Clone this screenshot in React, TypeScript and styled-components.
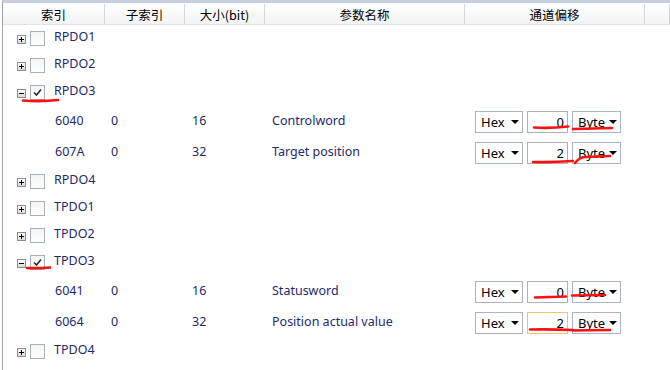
import React from 'react'
import styled, { createGlobalStyle } from 'styled-components'

const GlobalStyle = createGlobalStyle`
    html, body {
        margin: 0;
        padding: 0;
        background: #ffffff;
    }
    body {
        font-family: "Noto Sans", "Noto Sans CJK SC", sans-serif;
    }
`

const COLS = '102px 80px 80px 200px 180px 1fr'

const Frame = styled.div`
    position: relative;
    margin-left: 2px;
    height: 367px;
    border-left: 1px solid #9ea3ab;
    border-top: 3px solid #c7cfdf;
`

const Header = styled.div`
    display: grid;
    grid-template-columns: ${COLS};
    height: 20px;
    margin-top: 1px;
    background: linear-gradient(#ffffff, #f2f3f5);
    border-bottom: 1px solid #e1e2e4;
`

const HeaderCell = styled.div`
    display: flex;
    align-items: center;
    justify-content: center;
    border-right: 1px solid #d6d7d9;
    font-size: 12.5px;
    color: #000;
    font-family: "Noto Sans CJK SC", "Noto Sans", sans-serif;
`

const GroupRow = styled.div`
    display: flex;
    align-items: center;
    height: 27px;
    padding-left: 14px;
`

const Expander = styled.div`
    width: 9px;
    height: 9px;
    box-sizing: border-box;
    border: 1px solid #8e8e8e;
    background: linear-gradient(#ffffff, #d9d9d9);
    margin-top: 2px;
    display: flex;
    align-items: center;
    justify-content: center;
`

const Check = styled.div`
    width: 15px;
    height: 15px;
    box-sizing: border-box;
    margin-left: 4px;
    border: 1px solid #a9b0bd;
    background: linear-gradient(#f4f4f4, #ffffff);
    display: flex;
    align-items: center;
    justify-content: center;
`

const GroupName = styled.span`
    margin-left: 9px;
    padding-bottom: 4px;
    font-size: 12.5px;
    color: #1f2a6b;
`

const ItemRow = styled.div`
    display: grid;
    grid-template-columns: ${COLS};
    align-items: center;
    height: 31px;
    font-size: 12.5px;
    color: #1f2a6b;
`

const Cell = styled.div<{ $pad: number }>`
    padding-left: ${(p) => p.$pad}px;
    padding-bottom: 2px;
    white-space: nowrap;
`

const Controls = styled.div`
    display: flex;
    gap: 4px;
    padding-left: 10px;
`

const Select = styled.div<{ $w: number }>`
    width: ${(p) => p.$w}px;
    height: 22px;
    box-sizing: border-box;
    border: 1px solid #abb4c7;
    background: #fff;
    display: flex;
    align-items: center;
    justify-content: space-between;
    padding: 0 3px 0 5px;
    font-size: 13px;
    color: #000;
`

const Arrow = styled.span`
    width: 0;
    height: 0;
    border-left: 4px solid transparent;
    border-right: 4px solid transparent;
    border-top: 4px solid #000;
`

const NumInput = styled.div<{ $focus?: boolean }>`
    width: 41px;
    height: 22px;
    box-sizing: border-box;
    border: 1px solid ${(p) => (p.$focus ? '#ecc46e' : '#b0b0b0')};
    background: #fff;
    display: flex;
    align-items: center;
    justify-content: flex-end;
    padding-right: 3px;
    font-size: 13px;
    color: #000;
`

const Marks = styled.svg`
    position: absolute;
    left: -3px;
    top: -3px;
    pointer-events: none;
`

type Item = { index: string; sub: string; size: string; name: string; offset: string; focus?: boolean }
type Group = { name: string; open: boolean; items: Item[] }

const groups: Group[] = [
    { name: 'RPDO1', open: false, items: [] },
    { name: 'RPDO2', open: false, items: [] },
    {
        name: 'RPDO3',
        open: true,
        items: [
            { index: '6040', sub: '0', size: '16', name: 'Controlword', offset: '0' },
            { index: '607A', sub: '0', size: '32', name: 'Target position', offset: '2' },
        ],
    },
    { name: 'RPDO4', open: false, items: [] },
    { name: 'TPDO1', open: false, items: [] },
    { name: 'TPDO2', open: false, items: [] },
    {
        name: 'TPDO3',
        open: true,
        items: [
            { index: '6041', sub: '0', size: '16', name: 'Statusword', offset: '0' },
            { index: '6064', sub: '0', size: '32', name: 'Position actual value', offset: '2', focus: true },
        ],
    },
    { name: 'TPDO4', open: false, items: [] },
]

const PlusMinus: React.FC<{ open: boolean }> = ({ open }) => (
    <svg width="7" height="7" viewBox="0 0 7 7">
        <rect x="1" y="3" width="5" height="1" fill="#000" />
        {!open && <rect x="3" y="1" width="1" height="5" fill="#000" />}
    </svg>
)

const Tick = () => (
    <svg width="11" height="11" viewBox="0 0 11 11">
        <path d="M2 5.5 L4.5 8 L9 2.5" fill="none" stroke="#2b2b2b" strokeWidth="1.6" />
    </svg>
)

const redLines = [
    'M23 100.5 Q40 102 58 100',
    'M27 268 Q38 268.5 50 267.5',
    'M534 127.5 Q550 128.5 568 126.5',
    'M573 129 Q592 128.5 612 128',
    'M533 162 Q552 162.5 573 161',
    'M575 163 Q579 157.5 585 157 L610 156',
    'M535 297.5 Q550 297 566 296.5',
    'M572 295.5 Q588 295 605 295',
    'M530 329.5 Q550 329 573 330',
    'M573 330.5 Q590 330 610 330',
]

export default function App() {
    return (
        <>
            <GlobalStyle />
            <Frame>
                <Header>
                    <HeaderCell>索引</HeaderCell>
                    <HeaderCell>子索引</HeaderCell>
                    <HeaderCell>大小(bit)</HeaderCell>
                    <HeaderCell>参数名称</HeaderCell>
                    <HeaderCell>通道偏移</HeaderCell>
                    <HeaderCell />
                </Header>
                {groups.map((g) => (
                    <React.Fragment key={g.name}>
                        <GroupRow>
                            <Expander>
                                <PlusMinus open={g.open} />
                            </Expander>
                            <Check>{g.open && <Tick />}</Check>
                            <GroupName>{g.name}</GroupName>
                        </GroupRow>
                        {g.items.map((it) => (
                            <ItemRow key={it.index}>
                                <Cell $pad={52}>{it.index}</Cell>
                                <Cell $pad={6}>{it.sub}</Cell>
                                <Cell $pad={7}>{it.size}</Cell>
                                <Cell $pad={7}>{it.name}</Cell>
                                <Controls>
                                    <Select $w={48}>
                                        Hex
                                        <Arrow />
                                    </Select>
                                    <NumInput $focus={it.focus}>{it.offset}</NumInput>
                                    <Select $w={49}>
                                        Byte
                                        <Arrow />
                                    </Select>
                                </Controls>
                                <div />
                            </ItemRow>
                        ))}
                    </React.Fragment>
                ))}
                <Marks width="670" height="370" viewBox="0 0 670 370">
                    {redLines.map((d) => (
                        <path key={d} d={d} fill="none" stroke="#ff1010" strokeWidth="2.6" strokeLinecap="round" />
                    ))}
                </Marks>
            </Frame>
        </>
    )
}
